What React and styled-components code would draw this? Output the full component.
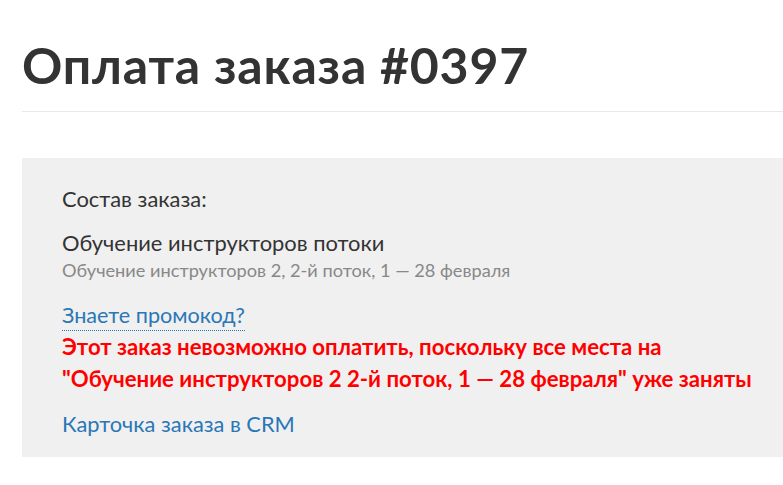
import React from "react";
import styled, { createGlobalStyle } from "styled-components";

const Global = createGlobalStyle`
  html, body { margin: 0; padding: 0; background: #fff; overflow: hidden; }
  body { font-family: "Lato", "Noto Sans", sans-serif; color: #333; }
`;

const Page = styled.div`
  padding: 20px 0 0 22px;
`;

const Title = styled.h1`
  margin: 0;
  font-size: 50px;
  font-weight: 700;
  line-height: 91px;
  color: #333;
  letter-spacing: 0.8px;
`;

const Divider = styled.hr`
  margin: 0;
  border: 0;
  border-top: 1px solid #e8e8e8;
`;

const Card = styled.section`
  margin-top: 46px;
  background: #f0f0f0;
  padding: 26px 0 18px 40px;
  display: flex;
  flex-direction: column;
`;

const Label = styled.div`
  font-size: 21.9px;
  line-height: 30px;
`;

const ItemTitle = styled.div`
  margin-top: 14px;
  font-size: 21.9px;
  line-height: 30px;
`;

const ItemSub = styled.div`
  font-size: 18.2px;
  line-height: 24px;
  color: #888;
`;

const Promo = styled.a`
  align-self: flex-start;
  margin-top: 18px;
  font-size: 21.6px;
  line-height: 30px;
  color: #2a77b6;
  text-decoration: none;
  border-bottom: 1px dotted #2a77b6;
`;

const Error = styled.div`
  font-size: 22.2px;
  font-weight: 700;
  line-height: 32px;
  color: #ff0000;
  white-space: nowrap;
`;

const CrmLink = styled.a`
  align-self: flex-start;
  margin-top: 14px;
  font-size: 21.8px;
  line-height: 30px;
  color: #2a77b6;
  text-decoration: none;
`;

export default function App() {
  return (
    <>
      <Global />
      <Page>
        <Title>Оплата заказа #0397</Title>
        <Divider />
        <Card>
          <Label>Состав заказа:</Label>
          <ItemTitle>Обучение инструкторов потоки</ItemTitle>
          <ItemSub>Обучение инструкторов 2, 2-й поток, 1 — 28 февраля</ItemSub>
          <Promo href="#">Знаете промокод?</Promo>
          <Error>
            Этот заказ невозможно оплатить, поскольку все места на
            <br />
            "Обучение инструкторов 2 2-й поток, 1 — 28 февраля" уже заняты
          </Error>
          <CrmLink href="#">Карточка заказа в CRM</CrmLink>
        </Card>
      </Page>
    </>
  );
}
